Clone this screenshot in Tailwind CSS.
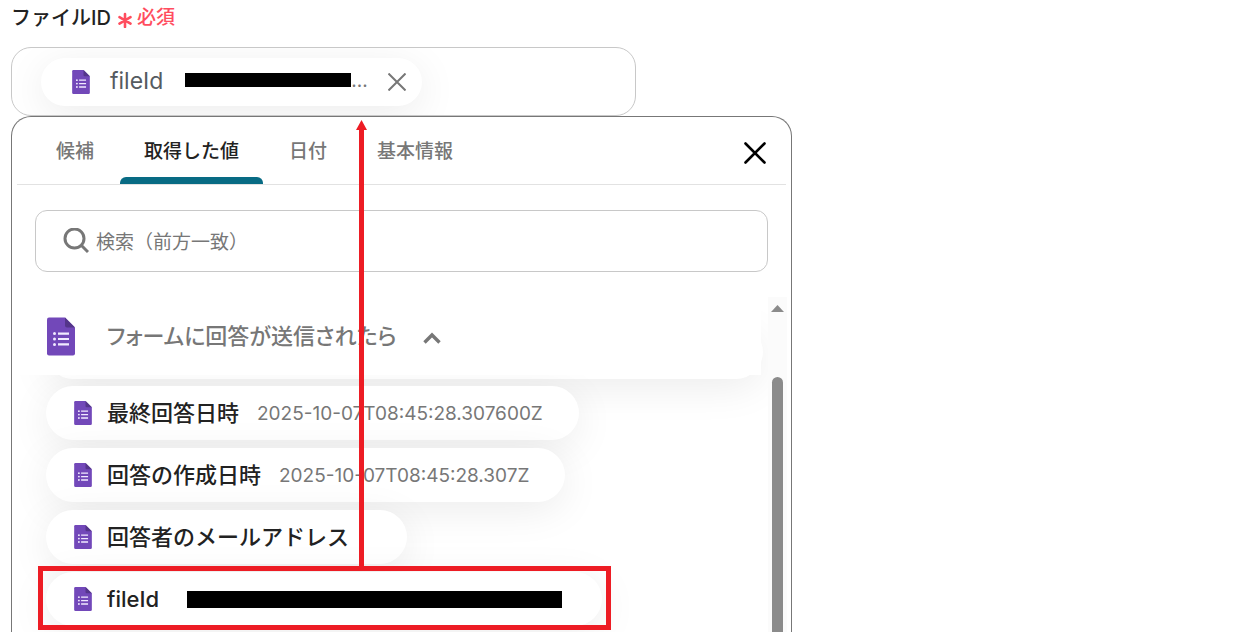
<!DOCTYPE html>
<html lang="ja">
<head>
  <title>ファイルID</title>
  <meta charset="UTF-8" />
  <meta name="viewport" content="width=device-width, initial-scale=1.0"/>
  <script src="https://cdn.jsdelivr.net/npm/@tailwindcss/browser@4"></script>
</head>

<body class="relative h-screen overflow-hidden bg-white font-['Inter','Noto_Sans_CJK_JP',sans-serif] text-[#222]">

  <!-- Shared form icon -->
  <svg class="hidden">
    <symbol id="form" viewBox="0 0 28 38">
      <path d="M2 0h16l10 10v26a2 2 0 0 1-2 2H2a2 2 0 0 1-2-2V2a2 2 0 0 1 2-2z" fill="#7248b9"/>
      <path d="M18 0l10 10H20a2 2 0 0 1-2-2z" fill="#54358a"/>
      <path d="M11 15h11v2.2H11zM11 20.4h11v2.2H11zM11 25.8h11V28H11z" fill="#f1eaff"/>
      <g fill="#f1eaff"><circle cx="7.5" cy="16.1" r="1.5"/><circle cx="7.5" cy="21.5" r="1.5"/><circle cx="7.5" cy="26.9" r="1.5"/></g>
    </symbol>
  </svg>

  <main class="flex h-full w-full max-w-[792px] flex-col pl-[11px]">

    <!-- Field label -->
    <div class="flex h-[47px] shrink-0 items-start pt-1">
      <label for="fileId" class="text-[20px] leading-7 font-medium">ファイルID</label>
      <svg class="mt-2 ml-1.5 size-4" viewBox="0 0 16 16" fill="none" stroke="#ff4d5e" stroke-width="2.6" stroke-linecap="round">
        <path d="M8 2v13M2.5 5.2l11 6.4M13.5 5.2l-11 6.4"/>
      </svg>
      <span class="ml-1 text-[19px] leading-7 font-medium text-[#ff4d5e]">必須</span>
    </div>

    <!-- Selected value -->
    <div class="flex h-[69px] w-4/5 shrink-0 items-center overflow-hidden rounded-[20px] border border-[#c8c8c8] pl-[29px]">
      <div class="flex h-12 shrink-0 items-center rounded-full bg-white pr-4 pl-[31px] shadow-[0_8px_40px_rgba(0,0,0,0.08)]">
        <svg class="h-6 w-[18px]"><use href="#form"/></svg>
        <span class="ml-5 text-[23px] text-[#555b61]">fileId</span>
        <span class="mb-1 ml-[22px] h-[14px] w-[166px] bg-black"></span>
        <span class="text-[19px] text-[#777]">...</span>
        <button type="button" aria-label="削除" class="ml-5">
          <svg class="size-[18px]" viewBox="0 0 18 18" stroke="#777" stroke-width="2"><path d="M.5.5l17 17M17.5.5l-17 17"/></svg>
        </button>
      </div>
      <input id="fileId" type="text" class="min-w-0 flex-1 px-2 outline-none" />
    </div>

    <!-- Value picker -->
    <section class="flex min-h-0 flex-1 flex-col overflow-hidden rounded-t-[20px] border border-b-0 border-[#777] bg-white">
      <div class="mx-[5px] flex h-[68px] shrink-0 items-center border-b border-[#e2e2e2] pr-5 pl-[15px]">
        <nav class="flex h-full flex-1 gap-[2px] text-[19px] font-medium text-[#777]">
          <button type="button" class="px-6 pt-1">候補</button>
          <button type="button" class="relative px-6 pt-1 text-[#222]">取得した値
            <span class="absolute inset-x-0 bottom-0 h-[7px] rounded-t-[6px] bg-[#086b84]"></span>
          </button>
          <button type="button" class="px-6 pt-1">日付</button>
          <button type="button" class="px-6 pt-1">基本情報</button>
        </nav>
        <button type="button" aria-label="閉じる" class="pt-1">
          <svg class="size-[22px]" viewBox="0 0 22 22" stroke="#000" stroke-width="2.6" stroke-linecap="round"><path d="M1.5 1.5l19 19M20.5 1.5l-19 19"/></svg>
        </button>
      </div>

      <div class="mx-[23px] mt-[25px] flex h-[62px] shrink-0 items-center rounded-[12px] border border-[#c8c8c8] pl-[27px]">
        <svg class="size-[26px]" viewBox="0 0 26 26" fill="none" stroke="#777" stroke-width="3"><circle cx="11.5" cy="10.5" r="9.5"/><path d="M18 17l7 7"/></svg>
        <input type="text" aria-label="検索" placeholder="検索（前方一致）" class="ml-[7px] min-w-0 flex-1 pt-1 text-[19px] outline-none placeholder:text-[#777]" />
      </div>

      <div class="mt-[25px] flex min-h-0 flex-1">
        <div class="min-w-0 flex-1 overflow-hidden">
          <!-- Group header -->
          <div class="relative mr-[7px] h-[78px]">
            <div class="absolute top-7 -right-[2px] left-[34px] h-[54px] rounded-full bg-white shadow-[0_8px_40px_rgba(0,0,0,0.08)]"></div>
            <button type="button" class="relative z-20 flex h-full w-full items-center bg-white pl-[35px]">
              <svg class="h-[39px] w-7"><use href="#form"/></svg>
              <span class="ml-8 text-[22px] font-medium text-[#777] [font-feature-settings:'palt']">フォームに回答が送信されたら</span>
              <svg class="mt-1 ml-[26px] h-3 w-[18px]" viewBox="0 0 18 12" fill="none" stroke="#777" stroke-width="3.4"><path d="M1.5 10.5L9 3l7.5 7.5"/></svg>
            </button>
          </div>
          <!-- Values -->
          <ul class="relative z-10 flex flex-col items-start gap-2 pt-[11px] pl-[34px] text-[22px] font-medium">
            <li><button type="button" class="flex h-[54px] items-center rounded-full bg-white pr-9 pl-7 shadow-[0_8px_40px_rgba(0,0,0,0.08)]">
              <svg class="h-6 w-[18px]"><use href="#form"/></svg>
              <span class="ml-[15px]">最終回答日時</span>
              <span class="ml-[18px] pt-[2px] text-[19px] font-normal text-[#777]">2025-10-07T08:45:28.307600Z</span>
            </button></li>
            <li><button type="button" class="flex h-[54px] items-center rounded-full bg-white pr-9 pl-7 shadow-[0_8px_40px_rgba(0,0,0,0.08)]">
              <svg class="h-6 w-[18px]"><use href="#form"/></svg>
              <span class="ml-[15px]">回答の作成日時</span>
              <span class="ml-[18px] pt-[2px] text-[19px] font-normal text-[#777]">2025-10-07T08:45:28.307Z</span>
            </button></li>
            <li><button type="button" class="flex h-[54px] items-center rounded-full bg-white pr-[58px] pl-7 shadow-[0_8px_40px_rgba(0,0,0,0.08)]">
              <svg class="h-6 w-[18px]"><use href="#form"/></svg>
              <span class="ml-[15px]">回答者のメールアドレス</span>
            </button></li>
            <li><button type="button" class="flex h-[54px] items-center rounded-full bg-white pr-10 pl-7 shadow-[0_8px_40px_rgba(0,0,0,0.08)]">
              <svg class="h-6 w-[18px]"><use href="#form"/></svg>
              <span class="ml-[15px]">fileId</span>
              <span class="ml-7 h-[17px] w-[375px] bg-black"></span>
            </button></li>
          </ul>
        </div>
        <!-- Scrollbar -->
        <div class="mr-1 flex w-[19px] flex-col items-center bg-[#fbfbfb] pt-2">
          <svg class="h-[7px] w-[13px] shrink-0" viewBox="0 0 13 7"><path d="M6.5 0L13 7H0z" fill="#8b8b8b"/></svg>
          <div class="mt-[65px] w-[11px] flex-1 rounded-t-full bg-[#8b8b8b]"></div>
        </div>
      </div>
    </section>
  </main>

  <!-- Annotation: highlighted value and arrow to the field -->
  <svg class="pointer-events-none absolute top-[120px] left-[356px] z-30 h-[448px] w-[11px]" viewBox="0 0 11 448" fill="#ed1c24">
    <path d="M5.5 0L11 10H8v438H3V10H0z"/>
  </svg>
  <div class="pointer-events-none absolute top-[566px] left-[38px] z-30 h-16 w-[573px] border-5 border-[#ed1c24]"></div>

</body>
</html>
